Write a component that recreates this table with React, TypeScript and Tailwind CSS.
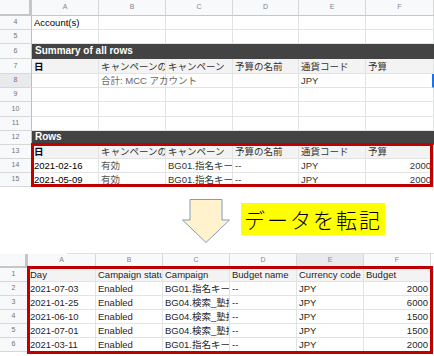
import React from "react";

type CellSpec = {
  t?: string;
  right?: boolean;
  bold?: boolean;
  color?: string;
  spill?: boolean;
  blue?: boolean;
};

const bodyCell =
  "border-r border-b border-[#e2e3e3] px-[2px] pb-[1px] flex items-end leading-[11px] whitespace-nowrap relative";

function Cell({ c, size }: { c: CellSpec; size: string }) {
  return (
    <div
      className={`${bodyCell} ${c.spill ? "overflow-visible z-10" : "overflow-hidden"} ${
        c.right ? "justify-end" : "justify-start"
      } ${c.bold ? "font-bold" : "font-normal"} ${size} ${c.blue ? "border-r-2 border-r-[#1a73e8]" : ""}`}
      style={{ color: c.color ?? "#1f1f1f" }}
    >
      {c.t ?? ""}
    </div>
  );
}

function RowHead({ n, sel }: { n: number; sel?: boolean }) {
  return (
    <div
      className={`border-r border-b border-r-[#bdbdbd] border-b-[#d7d7d7] flex items-center justify-center text-[7px] text-[#70757a] ${
        sel ? "bg-[#e8eaed]" : "bg-[#f8f9fa]"
      }`}
    >
      {n}
    </div>
  );
}

const topHeader: CellSpec[] = [
  { t: "日", bold: true, color: "#000" },
  { t: "キャンペーンのステータス", color: "#333" },
  { t: "キャンペーン", color: "#333" },
  { t: "予算の名前", color: "#333" },
  { t: "通貨コード", color: "#333" },
  { t: "予算", color: "#333" },
];

type TopRow =
  | { n: number; h: string; kind: "cells"; cells: CellSpec[]; gray?: boolean; sel?: boolean }
  | { n: number; h: string; kind: "dark"; title: string };

const e: CellSpec = {};

const topRows: TopRow[] = [
  { n: 4, h: "h-[14px]", kind: "cells", cells: [{ t: "Account(s)", color: "#000" }, e, e, e, e, e] },
  { n: 5, h: "h-[14px]", kind: "cells", cells: [e, e, e, e, e, e] },
  { n: 6, h: "h-[15px]", kind: "dark", title: "Summary of all rows" },
  { n: 7, h: "h-[15px]", kind: "cells", cells: topHeader, gray: true },
  {
    n: 8,
    h: "h-[14px]",
    kind: "cells",
    sel: true,
    cells: [e, { t: "合計: MCC アカウント", color: "#666", spill: true }, e, e, { t: "JPY", color: "#333" }, { blue: true }],
  },
  { n: 9, h: "h-[14px]", kind: "cells", cells: [e, e, e, e, e, e] },
  { n: 10, h: "h-[15px]", kind: "cells", cells: [e, e, e, e, e, e] },
  { n: 11, h: "h-[14px]", kind: "cells", cells: [e, e, e, e, e, e] },
  { n: 12, h: "h-[14px]", kind: "dark", title: "Rows" },
  { n: 13, h: "h-[14px]", kind: "cells", cells: topHeader, gray: true },
  {
    n: 14,
    h: "h-[14px]",
    kind: "cells",
    cells: [
      { t: "2021-02-16", color: "#000" },
      { t: "有効", color: "#555" },
      { t: "BG01.指名キーワード", color: "#333" },
      { t: "--", color: "#333" },
      { t: "JPY", color: "#333" },
      { t: "2000", right: true, color: "#333" },
    ],
  },
  {
    n: 15,
    h: "h-[14px]",
    kind: "cells",
    cells: [
      { t: "2021-05-09", color: "#000" },
      { t: "有効", color: "#555" },
      { t: "BG01.指名キーワード", color: "#333" },
      { t: "--", color: "#333" },
      { t: "JPY", color: "#333" },
      { t: "2000", right: true, color: "#333" },
    ],
  },
];

const TOP_GRID = "grid grid-cols-[32px_67px_67px_67px_66px_67px_68px]";
const BOT_GRID = "grid grid-cols-[28px_68px_67px_67px_67px_67px_67px]";

function ColHeads({ letters, sel }: { letters: string[]; sel?: number }) {
  return (
    <>
      {letters.map((l, i) => (
        <div
          key={l}
          className={`border-r border-b border-r-[#d7d7d7] border-b-[#c4c7c5] flex items-center justify-center text-[7px] text-[#80868b] ${
            sel === i ? "bg-[#e8eaed]" : "bg-[#f8f9fa]"
          }`}
        >
          {l}
        </div>
      ))}
    </>
  );
}

const LETTERS = ["A", "B", "C", "D", "E", "F"];

function TopSheet() {
  return (
    <div className="relative">
      <div className={`${TOP_GRID} h-[16px]`}>
        <div className="bg-[#f8f9fa] border-r-[3px] border-b-[2px] border-[#c4c7c5]" />
        <ColHeads letters={LETTERS} />
      </div>
      {topRows.map((r) =>
        r.kind === "dark" ? (
          <div key={r.n} className={`${TOP_GRID} ${r.h}`}>
            <RowHead n={r.n} />
            <div className="col-span-6 bg-[#434343] text-white font-bold text-[10px] leading-[12px] flex items-end pb-[1px] px-[3px] border-b border-[#434343]">
              {r.title}
            </div>
          </div>
        ) : (
          <div key={r.n} className={`${TOP_GRID} ${r.h} ${r.gray ? "bg-[#f3f3f3]" : "bg-white"}`}>
            <RowHead n={r.n} sel={r.sel} />
            {r.cells.map((c, i) => (
              <Cell key={i} c={c} size="text-[9.5px]" />
            ))}
          </div>
        )
      )}
      <div className="absolute left-[31px] top-[143px] w-[402px] h-[44px] border-[3px] border-[#c00000]" />
    </div>
  );
}

const botRows: CellSpec[][] = [
  [
    { t: "2021-07-03" },
    { t: "Enabled" },
    { t: "BG01.指名キーワード" },
    { t: "--" },
    { t: "JPY" },
    { t: "2000", right: true },
  ],
  [
    { t: "2021-01-25" },
    { t: "Enabled" },
    { t: "BG04.検索_塾推移" },
    { t: "--" },
    { t: "JPY" },
    { t: "6000", right: true },
  ],
  [
    { t: "2021-06-10" },
    { t: "Enabled" },
    { t: "BG04.検索_塾推移" },
    { t: "--" },
    { t: "JPY" },
    { t: "1500", right: true },
  ],
  [
    { t: "2021-07-01" },
    { t: "Enabled" },
    { t: "BG04.検索_塾推移" },
    { t: "--" },
    { t: "JPY" },
    { t: "1500", right: true },
  ],
  [
    { t: "2021-03-11" },
    { t: "Enabled" },
    { t: "BG01.指名キーワード" },
    { t: "--" },
    { t: "JPY" },
    { t: "2000", right: true },
  ],
];

const botHeader: CellSpec[] = [
  { t: "Day" },
  { t: "Campaign status" },
  { t: "Campaign" },
  { t: "Budget name" },
  { t: "Currency code" },
  { t: "Budget" },
];

function BottomSheet() {
  return (
    <div className="relative">
      <div className="flex h-[1px]">
        <div className="w-[67px] bg-white" />
        <div className="flex-1 bg-[#e0e0e0]" />
      </div>
      <div className={`${BOT_GRID} w-[431px] h-[14px]`}>
        <div className="bg-[#f8f9fa] border-r-[3px] border-b-[2px] border-[#c4c7c5]" />
        <ColHeads letters={LETTERS} sel={4} />
      </div>
      <div className={`${BOT_GRID} w-[431px] h-[14px] bg-[#f3f3f3]`}>
        <RowHead n={1} />
        {botHeader.map((c, i) => (
          <Cell key={i} c={c} size="text-[9.5px]" />
        ))}
      </div>
      {botRows.map((r, ri) => (
        <div key={ri} className={`${BOT_GRID} w-[431px] h-[14px] bg-white`}>
          <RowHead n={ri + 2} />
          {r.map((c, i) => (
            <Cell key={i} c={c} size="text-[9.5px]" />
          ))}
        </div>
      ))}
      <div className="absolute left-[27px] top-[13px] w-[406px] h-[88px] border-[3px] border-[#c00000]" />
    </div>
  );
}

function Middle() {
  return (
    <div className="h-[66px] flex items-start pl-[182px] bg-white">
      <svg width="48" height="44" viewBox="0 0 48 44" className="mt-[12px]">
        <polygon
          points="8,0.5 40,0.5 40,21 47.5,21 24,43.5 0.5,21 8,21"
          fill="#fff2cc"
          stroke="#7f9cc6"
          strokeWidth="1"
        />
      </svg>
      <div className="ml-[11px] mt-[16px] h-[32px] w-[144px] bg-[#ffff00] flex items-center justify-center font-['Noto_Sans_CJK_JP',sans-serif] font-light text-[21px] tracking-[2px] text-black leading-none">
        データを転記
      </div>
    </div>
  );
}

export default function App() {
  return (
    <div className="w-[434px] h-[356px] overflow-hidden bg-white font-['Liberation_Sans','Noto_Sans_CJK_JP',sans-serif]">
      <TopSheet />
      <Middle />
      <BottomSheet />
    </div>
  );
}
